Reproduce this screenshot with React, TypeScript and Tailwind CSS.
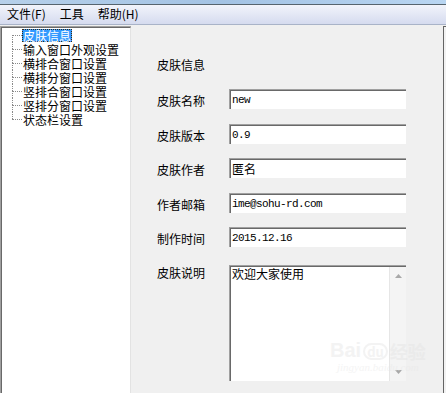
import React from "react";

const cjk = { fontFamily: '"Noto Sans CJK SC", "Noto Sans", sans-serif' };
const mono = { fontFamily: '"Liberation Mono", "Noto Sans CJK SC", monospace' };

const treeItems = [
  "皮肤信息",
  "输入窗口外观设置",
  "横排合窗口设置",
  "横排分窗口设置",
  "竖排合窗口设置",
  "竖排分窗口设置",
  "状态栏设置",
];

function TreeRow({ label, idx }: { label: string; idx: number }) {
  const first = idx === 0;
  const last = idx === treeItems.length - 1;
  return (
    <div className="flex h-[14px] items-center">
      <div className="ml-[10px] flex h-full w-[10px] flex-col">
        <div className={"h-[7px] w-full " + (first ? "" : "border-l border-dotted border-[#8a8a8a]")} />
        <div
          className={
            "h-[7px] w-full border-t border-dotted border-[#8a8a8a] " +
            (last ? "" : "border-l")
          }
        />
      </div>
      {first ? (
        <span className="flex h-[13px] items-center border border-dotted border-[#3a2a10] bg-[#3399ff] text-[12px] leading-[11px] text-white">
          {label}
        </span>
      ) : (
        <span className="px-[1px] text-[12px] leading-[13px] text-black">{label}</span>
      )}
    </div>
  );
}

function Field({ label, value, mt, cjkValue }: { label: string; value: string; mt: string; cjkValue?: boolean }) {
  return (
    <div className={"flex h-[20px] items-center " + mt}>
      <div className="w-[72px] pt-[3px] text-[12px] leading-[14px] text-black">{label}</div>
      <div className="h-[20px] w-[177px] border-l border-t border-[#a0a0a0] border-b-white border-r-white">
        <div className="h-full w-full border-l border-t border-[#696969] border-b-[#e3e3e3] border-r-[#e3e3e3] bg-white">
          <div
            className={
              "pl-[1px] pt-[2px] text-black " +
              (cjkValue ? "text-[12px] leading-[14px]" : "text-[11px] leading-[14px] tracking-[-0.6px]")
            }
            style={cjkValue ? cjk : mono}
          >
            {value}
          </div>
        </div>
      </div>
    </div>
  );
}

export default function App() {
  return (
    <div className="relative flex h-[393px] w-[446px] flex-col overflow-hidden bg-[#f0f0f0]" style={cjk}>
      {/* title strip */}
      <div className="h-[4px] w-full bg-gradient-to-r from-[#b6d0ea] via-[#a3c3e4] to-[#b9d6f2]" />
      <div className="h-[1px] w-full bg-[#56646e]" />
      {/* menu bar */}
      <div className="flex h-[20px] items-center border-b border-[#a9b3c8] bg-gradient-to-b from-[#f2f4fb] to-[#d5dbef] pb-[1px]">
        <span className="px-[7px] text-[12px] leading-[14px] text-black">文件(F)</span>
        <span className="px-[7px] text-[12px] leading-[14px] text-black">工具</span>
        <span className="px-[7px] text-[12px] leading-[14px] text-black">帮助(H)</span>
      </div>
      {/* body */}
      <div className="flex flex-1 pt-[1px]">
        {/* tree */}
        <div className="h-full w-[131px] border-l border-t border-[#a0a0a0] border-r-0">
          <div className="h-full w-full border-l border-t border-r border-[#696969] border-r-[#e3e3e3] bg-white pr-[1px]">
            <div className="flex flex-col">
              {treeItems.map((t, i) => (
                <TreeRow key={t} label={t} idx={i} />
              ))}
            </div>
          </div>
        </div>
        {/* form */}
        <div className="flex h-full w-[312px] flex-col pl-[26px] pt-[32px]">
          <div className="text-[12px] leading-[14px] text-black">皮肤信息</div>
          <Field label="皮肤名称" value="new" mt="mt-[17px]" />
          <Field label="皮肤版本" value="0.9" mt="mt-[15px]" />
          <Field label="皮肤作者" value="匿名" mt="mt-[14px]" cjkValue />
          <Field label="作者邮箱" value="ime@sohu-rd.com" mt="mt-[15px]" />
          <Field label="制作时间" value="2015.12.16" mt="mt-[14px]" />
          <div className="mt-[18px] flex">
            <div className="w-[72px] pt-[1px] text-[12px] leading-[14px] text-black">皮肤说明</div>
            <div className="h-[116px] w-[177px] border-l border-t border-[#a0a0a0] border-b-white border-r-white">
              <div className="flex h-full w-full border-l border-t border-[#696969] border-b-[#e3e3e3] border-r-[#e3e3e3] bg-white">
                <div className="flex-1 pl-[1px] text-[12px] leading-[14px] text-black">欢迎大家使用</div>
                <div className="flex w-[17px] flex-col items-center justify-between border-l border-[#e6e6e6] bg-[#f4f4f4] py-[7px]">
                  <svg width="7" height="4" viewBox="0 0 7 4">
                    <polygon points="3.5,0 7,4 0,4" fill="#a8a8a8" />
                  </svg>
                  <svg width="7" height="4" viewBox="0 0 7 4">
                    <polygon points="0,0 7,0 3.5,4" fill="#a8a8a8" />
                  </svg>
                </div>
              </div>
            </div>
          </div>
        </div>
        {/* right panel edge */}
        <div className="h-full flex-1 border-l border-t border-[#646464] bg-[#f2f2f2]" />
      </div>
      {/* watermark */}
      <div className="pointer-events-none absolute left-[330px] top-[340px] flex flex-col items-center opacity-40">
        <div className="flex items-end gap-[2px] leading-none">
          <span className="text-[20px] font-bold text-[#e2e2e2]" style={{ fontFamily: '"Liberation Sans", sans-serif' }}>
            Bai
          </span>
          <span className="rounded-full border-2 border-[#e2e2e2] px-[2px] text-[13px] font-bold text-[#e2e2e2]">du</span>
          <span className="text-[18px] font-bold text-[#e2e2e2]">经验</span>
        </div>
        <span className="mt-[2px] text-[11px] italic leading-none text-[#e6e6e6]" style={{ fontFamily: '"Liberation Serif", serif' }}>
          jingyan.baidu.com
        </span>
      </div>
    </div>
  );
}
